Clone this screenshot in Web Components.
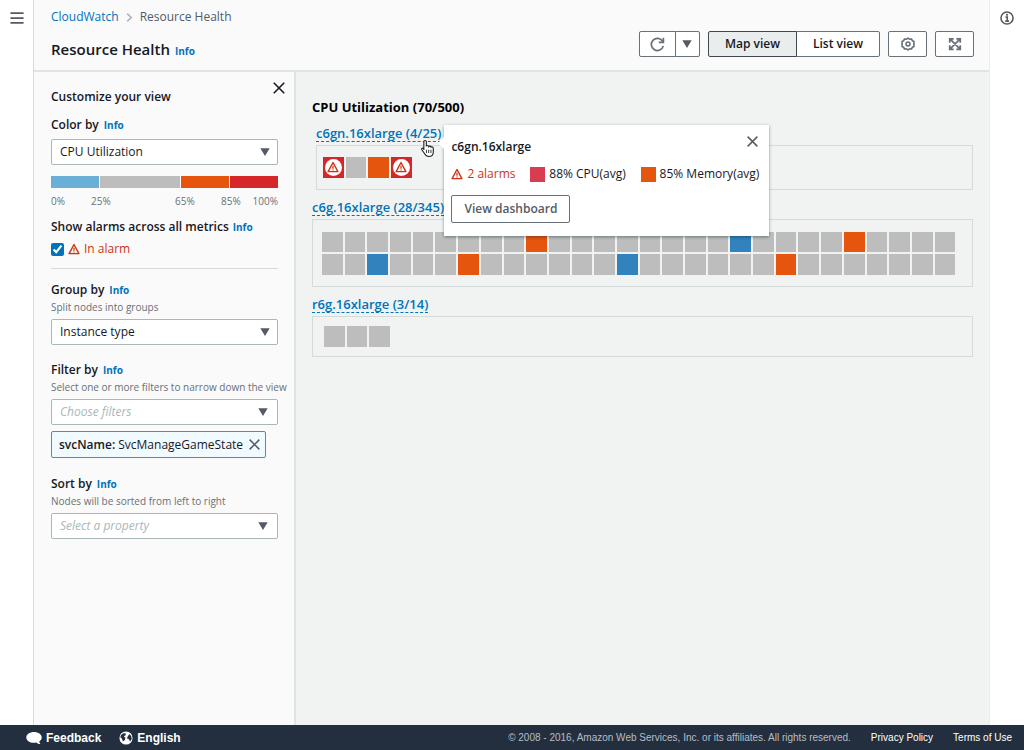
<!DOCTYPE html>
<html lang="en">
<head>
<meta charset="utf-8">
<meta name="viewport" content="width=device-width, initial-scale=1">
<title>Resource Health</title>
<style>
  body {
    margin: 0;
    font: 12px/16px "Open Sans", "Noto Sans", sans-serif;
    color: #16191f;
    background: #fff;
    --blue: #0073bb;
    --grey: #545b64;
    --red: #d13212;
  }
</style>
</head>
<body>
<app-shell>
  <page-header slot="header"></page-header>
  <side-panel slot="side">
    <select-field label="Color by" value="CPU Utilization"></select-field>
    <color-legend></color-legend>
    <alarm-toggle></alarm-toggle>
    <select-field label="Group by" help="Split nodes into groups" value="Instance type"></select-field>
    <select-field label="Filter by" help="Select one or more filters to narrow down the view" placeholder="Choose filters">
      <filter-token name="svcName:">SvcManageGameState</filter-token>
    </select-field>
    <select-field label="Sort by" help="Nodes will be sorted from left to right" placeholder="Select a property"></select-field>
  </side-panel>
  <health-map heading="CPU Utilization (70/500)">
    <node-group class="nested" heading="c6gn.16xlarge (4/25)" count="4" alarm="0,3" orange="2">
      <node-popover slot="popover" heading="c6gn.16xlarge"></node-popover>
    </node-group>
    <node-group class="roomy" heading="c6g.16xlarge (28/345)" count="56" orange="9,23,34,48" blue="18,30,41"></node-group>
    <node-group class="tight" heading="r6g.16xlarge (3/14)" count="3"></node-group>
  </health-map>
  <app-footer slot="footer"></app-footer>
</app-shell>

<script>
const icons = {
  menu: `<path d="M.5 2.500h15M.5 8h15M.5 13.500h15" stroke-width="2"/>`,
  info: `<circle cx="8" cy="8" r="6.900"/><path d="M6.300 7h2v4.300M6 11.600h4.300" stroke-width="1.800"/><circle cx="8" cy="4.400" r="1.200" fill="currentColor" stroke="none"/>`,
  chevron: `<path d="M4 1l7 7-7 7" stroke-width="3"/>`,
  close: `<path d="M2 2l12 12M14 2L2 14"/>`,
  caret: `<path d="M.5 2h15L8 14.500z" fill="currentColor" stroke="none"/>`,
  refresh: `<path d="M14.200 9.500A6.500 6.500 0 1 1 13.600 4.800M14.300 .8v5h-5"/>`,
  gear: `<path d="M8 1.200l1.800 1.300 2.200-.3.900 2 2 .9-.3 2.200L15 8l-.4.700.3 2.200-2 .9-.9 2-2.200-.3L8 14.800l-1.800-1.300-2.200.3-.9-2-2-.9.300-2.200L1 8l.4-.7-.3-2.200 2-.9.900-2 2.200.3z" stroke-linejoin="round"/><circle cx="8" cy="8" r="2.200"/>`,
  expand: `<path d="M2 6.500V2h4.500M9.500 2H14v4.500M14 9.500V14H9.500M6.500 14H2V9.500M2.500 2.500l11 11M13.500 2.500l-11 11" stroke-width="2"/>`,
  alarm: `<path d="M8 2l6.500 12.200h-13z" stroke-linejoin="round" stroke-width="1.900"/><path d="M8 6.300v4M8 11.200v1.600" stroke-width="1.700"/>`,
  bubble: `<path d="M8 2C3.600 2 .3 4.400 .3 7.500c0 3 3.300 5.300 7.700 5.300 .9 0 1.700-.1 2.500-.3 1 1.100 2.300 1.700 4 1.600-.8-.7-1.200-1.700-1.200-2.700 1.500-1 2.400-2.300 2.400-3.900C15.700 4.400 12.400 2 8 2z" fill="currentColor" stroke="none"/>`,
  globe: `<circle cx="8" cy="8" r="7.500" fill="currentColor" stroke="none"/><path d="M2.300 4.500L5 2.500l3 .3-.5 2L5.500 6l1.800 1.800-.6 2.500L4.500 12 3.300 8.500 1.500 7zM10 6l2-2.500L14 6l.6 3-2 3-1.500-2.800-2-.7z" fill="#232f3e" stroke="none"/>`,
  hand: `<path d="M5.200 9.800V2.500c0-1.600 2.200-1.600 2.200 0v4c.3-1 2-1 2.200.3 .5-.8 1.900-.6 2.100.5 .6-.6 1.900-.3 1.900.9v3.300c0 2.600-1.400 4-3.900 4-2 0-3-.9-3.800-2.400L3.300 9.400c-.5-1.200 1-1.900 1.900-.6z" fill="#fff" stroke="#222" stroke-width="1"/><path d="M7.500 9.500v3M9.500 9.500v3M11.500 9.500v3" stroke="#222" stroke-width=".8"/>`
};

class AppIcon extends HTMLElement {
  constructor() {
    super();
    this.attachShadow({ mode: "open" });
  }
  connectedCallback() {
    this.shadowRoot.innerHTML = `
      <style>
        :host { display: inline-block; width: 12px; height: 12px; flex: none; }
        svg { display: block; width: 100%; height: 100%; }
      </style>
      <svg viewBox="0 0 16 16" fill="none" stroke="currentColor" stroke-width="1.8" aria-hidden="true">${icons[this.getAttribute("name")]}</svg>`;
  }
}
customElements.define("app-icon", AppIcon);

class InfoLink extends HTMLElement {
  constructor() {
    super();
    this.attachShadow({ mode: "open" }).innerHTML = `
      <style>
        :host { display: inline-block; }
        a { font-size: 10px; font-weight: 700; color: var(--blue); text-decoration: none; }
      </style>
      <a href="#info">Info</a>`;
  }
}
customElements.define("info-link", InfoLink);

class AppShell extends HTMLElement {
  constructor() {
    super();
    this.attachShadow({ mode: "open" }).innerHTML = `
      <style>
        :host { display: flex; flex-direction: column; min-height: 100vh; }
        .page { flex: 1; display: flex; }
        .rail { box-sizing: border-box; width: 34px; flex: none; padding: 11px 10px; background: #fff; }
        .rail button { display: block; margin: 0; padding: 0; border: 0; background: none; color: var(--grey); }
        .rail app-icon { display: block; width: 14px; height: 14px; }
        .main { flex: 1; min-width: 0; display: flex; flex-direction: column; border-left: 1px solid #d5dbdb; border-right: 1px solid #eaeded; margin-left: -1px; }
        .body { flex: 1; display: flex; background: #f1f3f3; }
        .content { flex: 1; min-width: 0; }
      </style>
      <div class="page">
        <nav class="rail"><button aria-label="Open navigation"><app-icon name="menu"></app-icon></button></nav>
        <div class="main">
          <slot name="header"></slot>
          <div class="body">
            <slot name="side"></slot>
            <main class="content"><slot></slot></main>
          </div>
        </div>
        <aside class="rail"><button aria-label="Help"><app-icon name="info"></app-icon></button></aside>
      </div>
      <slot name="footer"></slot>`;
  }
}
customElements.define("app-shell", AppShell);

class PageHeader extends HTMLElement {
  constructor() {
    super();
    this.attachShadow({ mode: "open" }).innerHTML = `
      <style>
        :host { display: flex; justify-content: space-between; align-items: flex-end; padding: 8px 15px 8px 17px; background: #fafafa; border-bottom: 2px solid #e1e4e4; }
        .crumbs { display: flex; align-items: center; gap: 6px; line-height: 18px; color: var(--grey); }
        .crumbs a { color: var(--blue); text-decoration: none; }
        .crumbs app-icon { width: 9px; height: 9px; color: #aab7b8; }
        .title { display: flex; align-items: baseline; gap: 5px; margin: 11px 0 1px; }
        h1 { margin: 0; font-size: 15px; line-height: 24px; font-weight: 600; }
        .actions { display: flex; gap: 8px; margin-bottom: 5px; }
        .pair { display: flex; }
        button { box-sizing: border-box; height: 26px; display: flex; align-items: center; justify-content: center; margin: 0; padding: 0 16px; border: 1px solid #687078; border-radius: 2px; background: #fff; color: #687078; font: 600 12px/16px "Open Sans", "Noto Sans", sans-serif; }
        .pair button + button { margin-left: -1px; border-radius: 0 2px 2px 0; }
        .pair button:first-child { border-radius: 2px 0 0 2px; }
        .text { color: #16191f; }
        .on { position: relative; background: #eaeded; border-color: #414750; }
        .square { width: 39px; padding: 0; }
        .refresh { width: 37px; padding: 0; }
        .more { width: 25px; padding: 0; color: var(--grey); }
        .refresh app-icon { width: 15px; height: 15px; }
        .more app-icon { width: 10px; height: 10px; }
        .square app-icon { width: 14px; height: 14px; }
      </style>
      <div>
        <nav class="crumbs"><a href="#cloudwatch">CloudWatch</a><app-icon name="chevron"></app-icon><span>Resource Health</span></nav>
        <div class="title"><h1>Resource Health</h1><info-link></info-link></div>
      </div>
      <div class="actions">
        <div class="pair">
          <button class="refresh" aria-label="Refresh"><app-icon name="refresh"></app-icon></button>
          <button class="more" aria-label="Refresh options"><app-icon name="caret"></app-icon></button>
        </div>
        <div class="pair">
          <button class="text on" aria-pressed="true">Map view</button>
          <button class="text" aria-pressed="false">List view</button>
        </div>
        <button class="square" aria-label="Settings"><app-icon name="gear"></app-icon></button>
        <button class="square" aria-label="Full screen"><app-icon name="expand"></app-icon></button>
      </div>`;
  }
}
customElements.define("page-header", PageHeader);

class SidePanel extends HTMLElement {
  constructor() {
    super();
    this.attachShadow({ mode: "open" }).innerHTML = `
      <style>
        :host { box-sizing: border-box; width: 262px; flex: none; padding: 8px 16px 8px 17px; background: #fafafa; border-right: 2px solid #e1e4e4; }
        header { display: flex; justify-content: space-between; align-items: flex-start; margin: 0 -9px 12px 0; }
        h2 { margin: 9px 0 0; font-size: 12px; line-height: 16px; font-weight: 600; }
        button { margin: 0; padding: 1px; border: 0; background: none; display: block; color: #16191f; }
        app-icon { display: block; width: 14px; height: 14px; }
      </style>
      <header>
        <h2>Customize your view</h2>
        <button aria-label="Close panel"><app-icon name="close"></app-icon></button>
      </header>
      <slot></slot>`;
  }
}
customElements.define("side-panel", SidePanel);

class SelectField extends HTMLElement {
  constructor() {
    super();
    this.attachShadow({ mode: "open" });
  }
  connectedCallback() {
    const help = this.getAttribute("help");
    const placeholder = this.getAttribute("placeholder");
    const text = placeholder || this.getAttribute("value");
    this.shadowRoot.innerHTML = `
      <style>
        :host { display: block; margin-bottom: 17px; }
        .head { display: flex; align-items: baseline; gap: 5px; }
        label { font-weight: 600; }
        p { margin: 2px 0 5px; font-size: 10px; line-height: 14px; color: #687078; white-space: nowrap; }
        .box { display: grid; align-items: center; }
        .head + .box { margin-top: 6px; }
        select, app-icon { grid-area: 1 / 1; }
        select { box-sizing: border-box; width: 100%; height: 26px; margin: 0; padding: 0 26px 0 8px; border: 1px solid #aab7b8; border-radius: 2px; appearance: none; background: #fff; color: #16191f; font: 12px/16px "Open Sans", "Noto Sans", sans-serif; }
        app-icon { width: 10px; height: 10px; justify-self: end; margin-right: 8px; color: var(--grey); pointer-events: none; }
        .empty select { color: #aab7b8; font-style: italic; }
        .empty app-icon { margin-right: 10px; }
        slot { display: block; }
      </style>
      <div class="head"><label for="field">${this.getAttribute("label")}</label><info-link></info-link></div>
      ${help ? `<p>${help}</p>` : ""}
      <div class="box ${placeholder ? "empty" : ""}">
        <select id="field"><option>${text}</option></select>
        <app-icon name="caret"></app-icon>
      </div>
      <slot></slot>`;
  }
}
customElements.define("select-field", SelectField);

class FilterToken extends HTMLElement {
  constructor() {
    super();
    this.attachShadow({ mode: "open" });
  }
  connectedCallback() {
    this.shadowRoot.innerHTML = `
      <style>
        :host { box-sizing: border-box; display: flex; align-items: center; width: fit-content; height: 27px; margin: 6px 0 18px; padding: 0 4px 0 7px; border: 1px solid #3b93cb; border-radius: 2px; background: #f1faff; color: #16191f; }
        b { font-weight: 600; margin-right: 3px; }
        button { display: block; margin: 0 0 0 5px; padding: 0; border: 0; background: none; color: var(--grey); }
        app-icon { display: block; width: 13px; height: 13px; }
      </style>
      <b>${this.getAttribute("name")}</b><slot></slot>
      <button aria-label="Remove filter"><app-icon name="close"></app-icon></button>`;
  }
}
customElements.define("filter-token", FilterToken);

class ColorLegend extends HTMLElement {
  constructor() {
    super();
    this.attachShadow({ mode: "open" }).innerHTML = `
      <style>
        :host { display: block; margin: -6px 0 11px; font-size: 10px; line-height: 14px; color: #687078; }
        .bar { display: grid; grid-template-columns: 48fr 81fr 48fr 48fr; gap: 1px; height: 12px; }
        .marks { display: grid; grid-template-columns: 40fr 84fr 46fr 30fr 27fr; margin-top: 6px; }
        .marks :last-child { justify-self: end; }
      </style>
      <div class="bar">
        <i style="background:#6baed6"></i><i style="background:#bdbdbd"></i><i style="background:#e6550d"></i><i style="background:#d62728"></i>
      </div>
      <div class="marks"><span>0%</span><span>25%</span><span>65%</span><span>85%</span><span>100%</span></div>`;
  }
}
customElements.define("color-legend", ColorLegend);

class AlarmToggle extends HTMLElement {
  constructor() {
    super();
    this.attachShadow({ mode: "open" }).innerHTML = `
      <style>
        :host { display: block; margin-bottom: 13px; padding-bottom: 11px; border-bottom: 1px solid #d5dbdb; }
        .head { display: flex; align-items: baseline; gap: 4px; font-weight: 600; white-space: nowrap; }
        label { display: flex; align-items: center; gap: 4px; margin-top: 6px; color: var(--red); }
        input { width: 13px; height: 13px; margin: 0; accent-color: #0073bb; }
      </style>
      <div class="head"><span>Show alarms across all metrics</span><info-link></info-link></div>
      <label><input type="checkbox" checked><app-icon name="alarm"></app-icon>In alarm</label>`;
  }
}
customElements.define("alarm-toggle", AlarmToggle);

class HealthMap extends HTMLElement {
  constructor() {
    super();
    this.attachShadow({ mode: "open" });
  }
  connectedCallback() {
    this.shadowRoot.innerHTML = `
      <style>
        :host { display: flex; flex-direction: column; gap: 9px; padding: 26px 16px; }
        h2 { margin: 0; font-size: 13px; line-height: 18px; font-weight: 700; color: #000; }
      </style>
      <h2>${this.getAttribute("heading")}</h2>
      <slot></slot>`;
  }
}
customElements.define("health-map", HealthMap);

class NodeGroup extends HTMLElement {
  constructor() {
    super();
    this.attachShadow({ mode: "open" });
  }
  listOf(name) {
    return (this.getAttribute(name) || "").split(",").filter(Boolean).map(Number);
  }
  connectedCallback() {
    const kinds = ["alarm", "orange", "blue"];
    let tiles = "";
    for (let i = 0; i < Number(this.getAttribute("count")); i++) {
      const kind = kinds.find(k => this.listOf(k).includes(i)) || "";
      const icon = kind === "alarm" ? `<span><app-icon name="alarm"></app-icon></span>` : "";
      tiles += `<div class="tile ${kind}">${icon}</div>`;
    }
    this.shadowRoot.innerHTML = `
      <style>
        :host { display: block; }
        .anchor { position: relative; width: fit-content; margin-bottom: 3px; }
        a { display: block; color: var(--blue); font-size: 13px; line-height: 16px; font-weight: 600; text-decoration: none; border-bottom: 1px dashed var(--blue); white-space: nowrap; }
        .nodes { display: grid; grid-template-columns: repeat(28, 1fr); gap: 2px; padding: 11px 17px 11px 9px; border: 1px solid #d5dbdb; }
        .tile { aspect-ratio: 1; background: #bdbdbd; display: flex; align-items: center; justify-content: center; }
        .orange { background: #e6550d; }
        .blue { background: #3182bd; }
        .alarm { background: #d62728; }
        .alarm span { width: 17px; height: 17px; border-radius: 50%; background: #fff; color: var(--red); display: flex; align-items: center; justify-content: center; }
        :host(.nested) { margin-left: 4px; }
        :host(.nested) .nodes { padding-left: 6px; padding-right: 16px; }
        :host(.roomy) .nodes { padding-top: 12px; }
        :host(.tight) .nodes { padding: 9px 15px 9px 11px; }
      </style>
      <div class="anchor"><a href="#group">${this.getAttribute("heading")}</a><slot name="popover"></slot></div>
      <div class="nodes">${tiles}</div>`;
  }
}
customElements.define("node-group", NodeGroup);

class NodePopover extends HTMLElement {
  constructor() {
    super();
    this.attachShadow({ mode: "open" });
  }
  connectedCallback() {
    this.shadowRoot.innerHTML = `
      <style>
        :host { position: absolute; z-index: 1; left: calc(100% + 3px); top: 0; box-sizing: border-box; width: 325px; padding: 7px 10px 13px 7px; background: #fff; box-shadow: 0 1px 3px rgba(0, 28, 36, .45); }
        :host::before { content: ""; position: absolute; left: -6px; top: 12px; border: 6px solid transparent; border-left: 0; border-right-color: #fff; }
        .pointer { position: absolute; left: -26px; top: 14px; width: 18px; height: 18px; }
        header { display: flex; justify-content: space-between; align-items: flex-start; }
        h3 { margin: 7px 0 0; font-size: 12px; line-height: 16px; font-weight: 600; }
        .close { display: block; margin: 0; padding: 3px 0; border: 0; background: none; color: var(--grey); }
        .close app-icon { display: block; width: 13px; height: 13px; }
        .stats { display: flex; align-items: center; justify-content: space-between; margin-top: 11px; white-space: nowrap; }
        .stats span { display: flex; align-items: center; gap: 4px; }
        .stats .alarms { color: var(--red); }
        i { width: 15px; height: 15px; background: #e6550d; }
        .crimson { background: #d73c50; }
        .view { display: block; height: 28px; margin: 13px 0 0; padding: 0 12px; border: 1px solid #687078; border-radius: 2px; background: #fff; color: var(--grey); font: 600 12px/16px "Open Sans", "Noto Sans", sans-serif; }
      </style>
      <app-icon class="pointer" name="hand"></app-icon>
      <header>
        <h3>${this.getAttribute("heading")}</h3>
        <button class="close" aria-label="Close"><app-icon name="close"></app-icon></button>
      </header>
      <div class="stats">
        <span class="alarms"><app-icon name="alarm"></app-icon>2 alarms</span>
        <span><i class="crimson"></i>88% CPU(avg)</span>
        <span><i></i>85% Memory(avg)</span>
      </div>
      <button class="view">View dashboard</button>`;
  }
}
customElements.define("node-popover", NodePopover);

class AppFooter extends HTMLElement {
  constructor() {
    super();
    this.attachShadow({ mode: "open" }).innerHTML = `
      <style>
        :host { display: flex; align-items: center; justify-content: space-between; height: 25px; padding: 0 12px 0 26px; background: #232f3e; color: #b9bdc2; font: 10px/14px "Liberation Sans", Arial, sans-serif; }
        div { display: flex; align-items: center; gap: 20px; }
        a { display: flex; align-items: center; gap: 4px; color: #fff; text-decoration: none; }
        .tools { gap: 18px; }
        .tools a { font-size: 12px; font-weight: bold; }
        .tools app-icon { width: 16px; height: 16px; }
        .tools .globe { width: 14px; height: 14px; }
      </style>
      <div class="tools">
        <a href="#feedback"><app-icon name="bubble"></app-icon>Feedback</a>
        <a href="#language"><app-icon class="globe" name="globe"></app-icon>English</a>
      </div>
      <div>
        <span>© 2008 - 2016, Amazon Web Services, Inc. or its affiliates. All rights reserved.</span>
        <a href="#privacy">Privacy Policy</a>
        <a href="#terms">Terms of Use</a>
      </div>`;
  }
}
customElements.define("app-footer", AppFooter);
</script>
</body>
</html>
